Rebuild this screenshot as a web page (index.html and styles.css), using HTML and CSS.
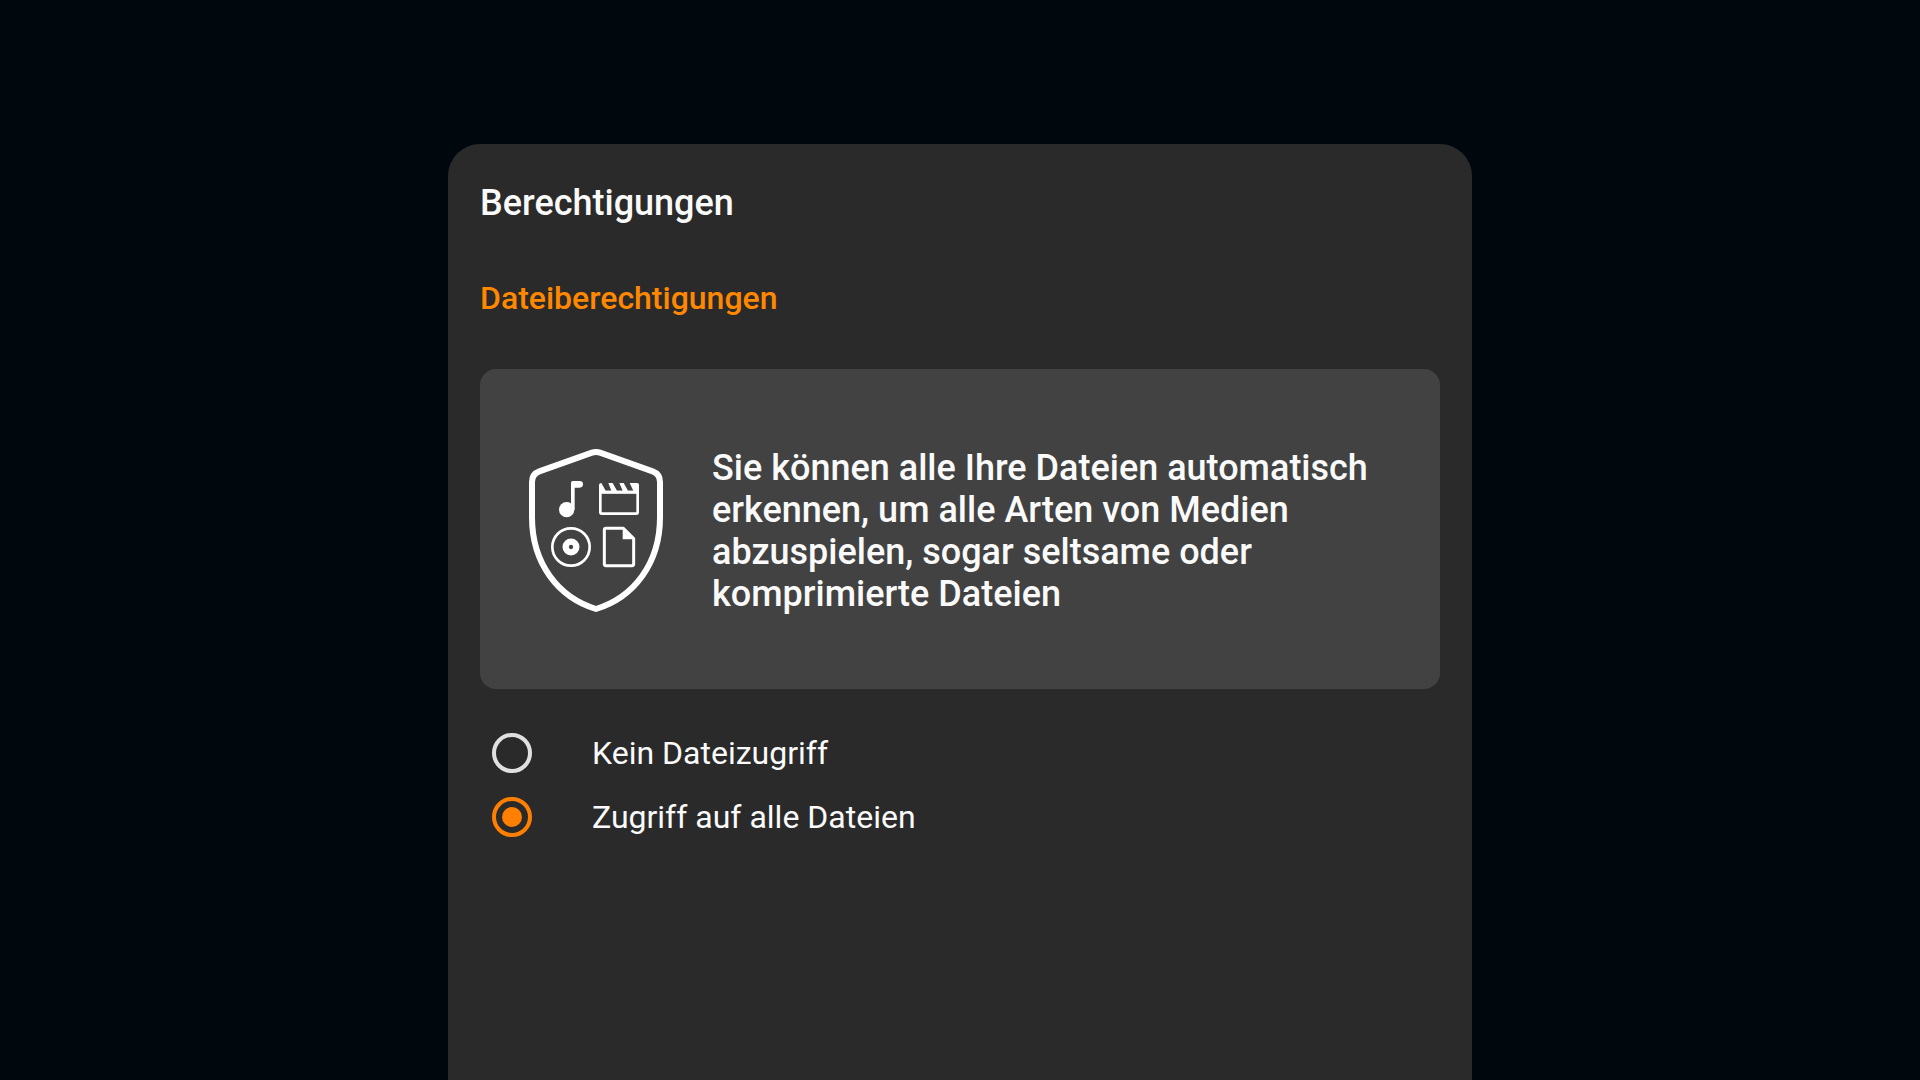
FILE: index.html
```
<!DOCTYPE html>
<html lang="de">
<head>
    <meta charset="UTF-8">
    <meta name="viewport" content="width=device-width, initial-scale=1.0">
    <title>Berechtigungen</title>
    <link rel="stylesheet" href="styles.css">
</head>
<body>
    <main class="sheet">
        <h1>Berechtigungen</h1>
        <h2>Dateiberechtigungen</h2>
        <div class="info-card">
            <svg class="shield" viewBox="54 57 408 492" fill="none" stroke="#fff" aria-hidden="true">
                <path stroke-width="18" stroke-linejoin="round" d="M246 68 Q258 64 270 68 L428 124 Q450 132 450 156 V262 C450 400 372 502 258 537 C144 502 66 400 66 262 V156 Q66 132 88 124 Z"/>
                <!-- note -->
                <g fill="#fff" stroke="none">
                    <circle cx="170" cy="239" r="23"/>
                    <path d="M183 158 Q183 153 188 153 H209 Q219 153 219 163 Q219 173 209 173 H194 V239 H183 Z"/>
                </g>
                <!-- clapperboard -->
                <rect x="271" y="186" width="112" height="65" rx="4" stroke-width="8"/>
                <path fill="#fff" stroke="none" d="M267 165 Q267 159 274 159 L287 182 H304 L295 159 H308 L321 182 H338 L328 159 H341 L354 182 H370 L359 159 H381 Q387 159 387 165 V191 H267 Z"/>
                <!-- disc -->
                <circle cx="183" cy="351" r="56" stroke-width="8"/>
                <circle cx="183" cy="351" r="16" stroke-width="19"/>
                <!-- document -->
                <path stroke-width="9" stroke-linejoin="round" d="M288 295 H340 L371 326 V402 Q371 407 366 407 H288 Q283 407 283 402 V300 Q283 295 288 295 Z"/>
                <path fill="#fff" stroke="none" d="M338 293 L373 328 H338 Z"/>
            </svg>
            <p>Sie können alle Ihre Dateien automatisch erkennen, um alle Arten von Medien abzuspielen, sogar seltsame oder komprimierte Dateien</p>
        </div>
        <form class="options">
            <label for="noAccess">
                <input type="radio" id="noAccess" name="access" value="none">
                Kein Dateizugriff
            </label>
            <label for="allAccess">
                <input type="radio" id="allAccess" name="access" value="all" checked>
                Zugriff auf alle Dateien
            </label>
        </form>
    </main>
</body>
</html>
```
FILE: styles.css
```
* {
    box-sizing: border-box;
}
body {
    margin: 0;
    min-height: 100vh;
    padding: 144px 32px 0;
    display: flex;
    justify-content: center;
    background-color: #00070d;
    color: #fafafa;
    font-family: Roboto, sans-serif;
}
.sheet {
    width: 100%;
    max-width: 1024px;
    padding: 38px 32px;
    border-radius: 32px 32px 0 0;
    background-color: #2a2a2a;
}
h1 {
    margin: 0 0 55px;
    font-size: 36px;
    font-weight: 500;
    line-height: 42px;
}
h2 {
    margin: 0 0 52px;
    color: #ff8800;
    font-size: 32px;
    font-weight: 500;
    line-height: 38px;
}
.info-card {
    display: flex;
    align-items: center;
    gap: 48px;
    padding: 78px 48px 74px;
    border-radius: 16px;
    background-color: #424242;
}
.shield {
    flex: none;
    width: 136px;
    height: 164px;
}
.info-card p {
    margin: 0;
    font-size: 36px;
    font-weight: 500;
    line-height: 42px;
}
.options {
    margin-top: 32px;
}
.options label {
    display: flex;
    align-items: center;
    gap: 60px;
    padding: 0 12px;
    font-size: 32px;
    line-height: 64px;
    cursor: pointer;
}
.options input {
    appearance: none;
    flex: none;
    width: 40px;
    height: 40px;
    margin: 0;
    border: 4px solid #e0e0e0;
    border-radius: 50%;
}
.options input:checked {
    padding: 6px;
    border-color: #ff7f00;
    background: #ff7f00 content-box;
}
```
